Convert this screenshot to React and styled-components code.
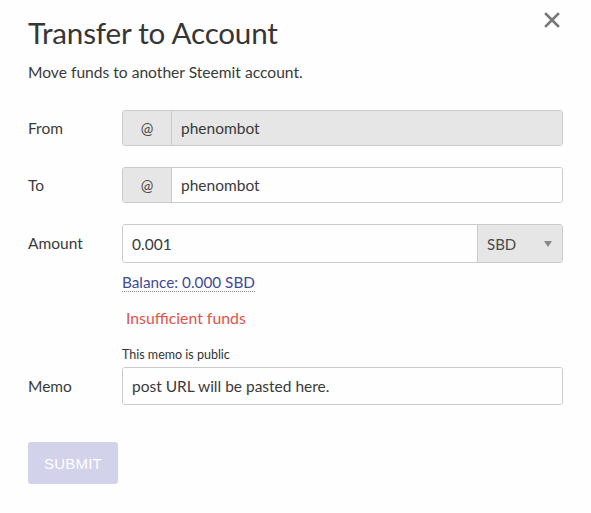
import React from 'react';
import styled, { createGlobalStyle } from 'styled-components';

const GlobalStyle = createGlobalStyle`
    html, body {
        margin: 0;
        padding: 0;
        background: #fefefe;
    }
    body {
        font-family: Lato, "Open Sans", sans-serif;
        color: #333;
    }
`;

const Modal = styled.div`
    position: relative;
    width: 591px;
    box-sizing: border-box;
    padding: 8px 28px 20px;
`;

const CloseButton = styled.button`
    position: absolute;
    top: 12px;
    right: 31px;
    width: 16px;
    height: 16px;
    padding: 0;
    border: none;
    background: none;
    cursor: pointer;
    display: flex;
`;

const Title = styled.h1`
    margin: 0;
    font-size: 29.6px;
    font-weight: 400;
    line-height: 50px;
    color: #363636;
    letter-spacing: -0.2px;
`;

const Subtitle = styled.p`
    margin: 4px 0 0;
    font-size: 15.6px;
    line-height: 20px;
    color: #3a3a3a;
`;

const Form = styled.form`
    margin-top: 28px;
    display: flex;
    flex-direction: column;
`;

const Row = styled.div`
    display: grid;
    grid-template-columns: 94px 1fr;
    align-items: start;
    margin-top: ${p => p.gap || 0}px;
`;

const Label = styled.label`
    font-size: 15.5px;
    line-height: ${p => p.h || 36}px;
    color: #3a3a3a;
`;

const Field = styled.div`
    display: flex;
    flex-direction: column;
`;

const InputGroup = styled.div`
    display: flex;
    height: ${p => p.h || 36}px;
    border: 1px solid #cacaca;
    border-radius: 3px;
    overflow: hidden;
    box-sizing: border-box;
    box-shadow: inset 0 1px 2px rgba(0, 0, 0, 0.05);
`;

const Addon = styled.span`
    width: 48px;
    flex-shrink: 0;
    display: flex;
    align-items: center;
    justify-content: center;
    background: #e6e6e6;
    border-right: 1px solid #cacaca;
    font-size: 15px;
    color: #4a4a4a;
`;

const Input = styled.input`
    flex: 1;
    min-width: 0;
    border: none;
    outline: none;
    padding: 0 9px;
    font-family: inherit;
    font-size: 15.5px;
    color: #3a3a3a;
    background: ${p => (p.disabled ? '#e6e6e6' : '#fefefe')};
`;

const Select = styled.div`
    width: 85px;
    flex-shrink: 0;
    display: flex;
    align-items: center;
    justify-content: space-between;
    padding: 0 10px 0 9px;
    box-sizing: border-box;
    background: #e6e6e6;
    border-left: 1px solid #cacaca;
    font-size: 15px;
    color: #4a4a4a;
`;

const Caret = styled.span`
    width: 0;
    height: 0;
    border-left: 4px solid transparent;
    border-right: 4px solid transparent;
    border-top: 6px solid #888;
`;

const Balance = styled.a`
    align-self: flex-start;
    margin-top: 10px;
    font-size: 15.3px;
    color: #3f4a93;
    text-decoration: none;
    border-bottom: 1px dotted #888;
    line-height: 18px;
    cursor: pointer;
`;

const ErrorText = styled.div`
    margin-top: 16px;
    padding-left: 4px;
    font-size: 15.8px;
    line-height: 20px;
    color: #e0534a;
`;

const Hint = styled.div`
    margin-top: 19px;
    padding-left: 94px;
    font-size: 12.5px;
    line-height: 16px;
    color: #333;
`;

const SubmitButton = styled.button`
    align-self: flex-start;
    margin-top: 37px;
    width: 90px;
    height: 42px;
    border: none;
    border-radius: 3px;
    background: #d2d3ea;
    color: #fff;
    font-family: "Liberation Sans", Arial, sans-serif;
    font-size: 15px;
    letter-spacing: 0.2px;
    cursor: not-allowed;
`;

const CloseIcon = () => (
    <svg width="16" height="16" viewBox="0 0 16 16">
        <path d="M2 2 L14 14 M14 2 L2 14" stroke="#777" strokeWidth="2.6" strokeLinecap="square" />
    </svg>
);

const App = () => (
    <>
        <GlobalStyle />
        <Modal>
            <CloseButton aria-label="Close"><CloseIcon /></CloseButton>
            <Title>Transfer to Account</Title>
            <Subtitle>Move funds to another Steemit account.</Subtitle>
            <Form onSubmit={e => e.preventDefault()}>
                <Row>
                    <Label>From</Label>
                    <InputGroup>
                        <Addon>@</Addon>
                        <Input disabled value="phenombot" readOnly />
                    </InputGroup>
                </Row>
                <Row gap={21}>
                    <Label>To</Label>
                    <InputGroup>
                        <Addon>@</Addon>
                        <Input value="phenombot" readOnly />
                    </InputGroup>
                </Row>
                <Row gap={21}>
                    <Label h={38}>Amount</Label>
                    <Field>
                        <InputGroup h={39}>
                            <Input value="0.001" readOnly />
                            <Select>SBD <Caret /></Select>
                        </InputGroup>
                        <Balance>Balance: 0.000 SBD</Balance>
                        <ErrorText>Insufficient funds</ErrorText>
                    </Field>
                </Row>
                <Hint>This memo is public</Hint>
                <Row gap={4}>
                    <Label h={38}>Memo</Label>
                    <InputGroup h={38}>
                        <Input value="post URL will be pasted here." readOnly />
                    </InputGroup>
                </Row>
                <SubmitButton type="submit" disabled>SUBMIT</SubmitButton>
            </Form>
        </Modal>
    </>
);

export default App;
